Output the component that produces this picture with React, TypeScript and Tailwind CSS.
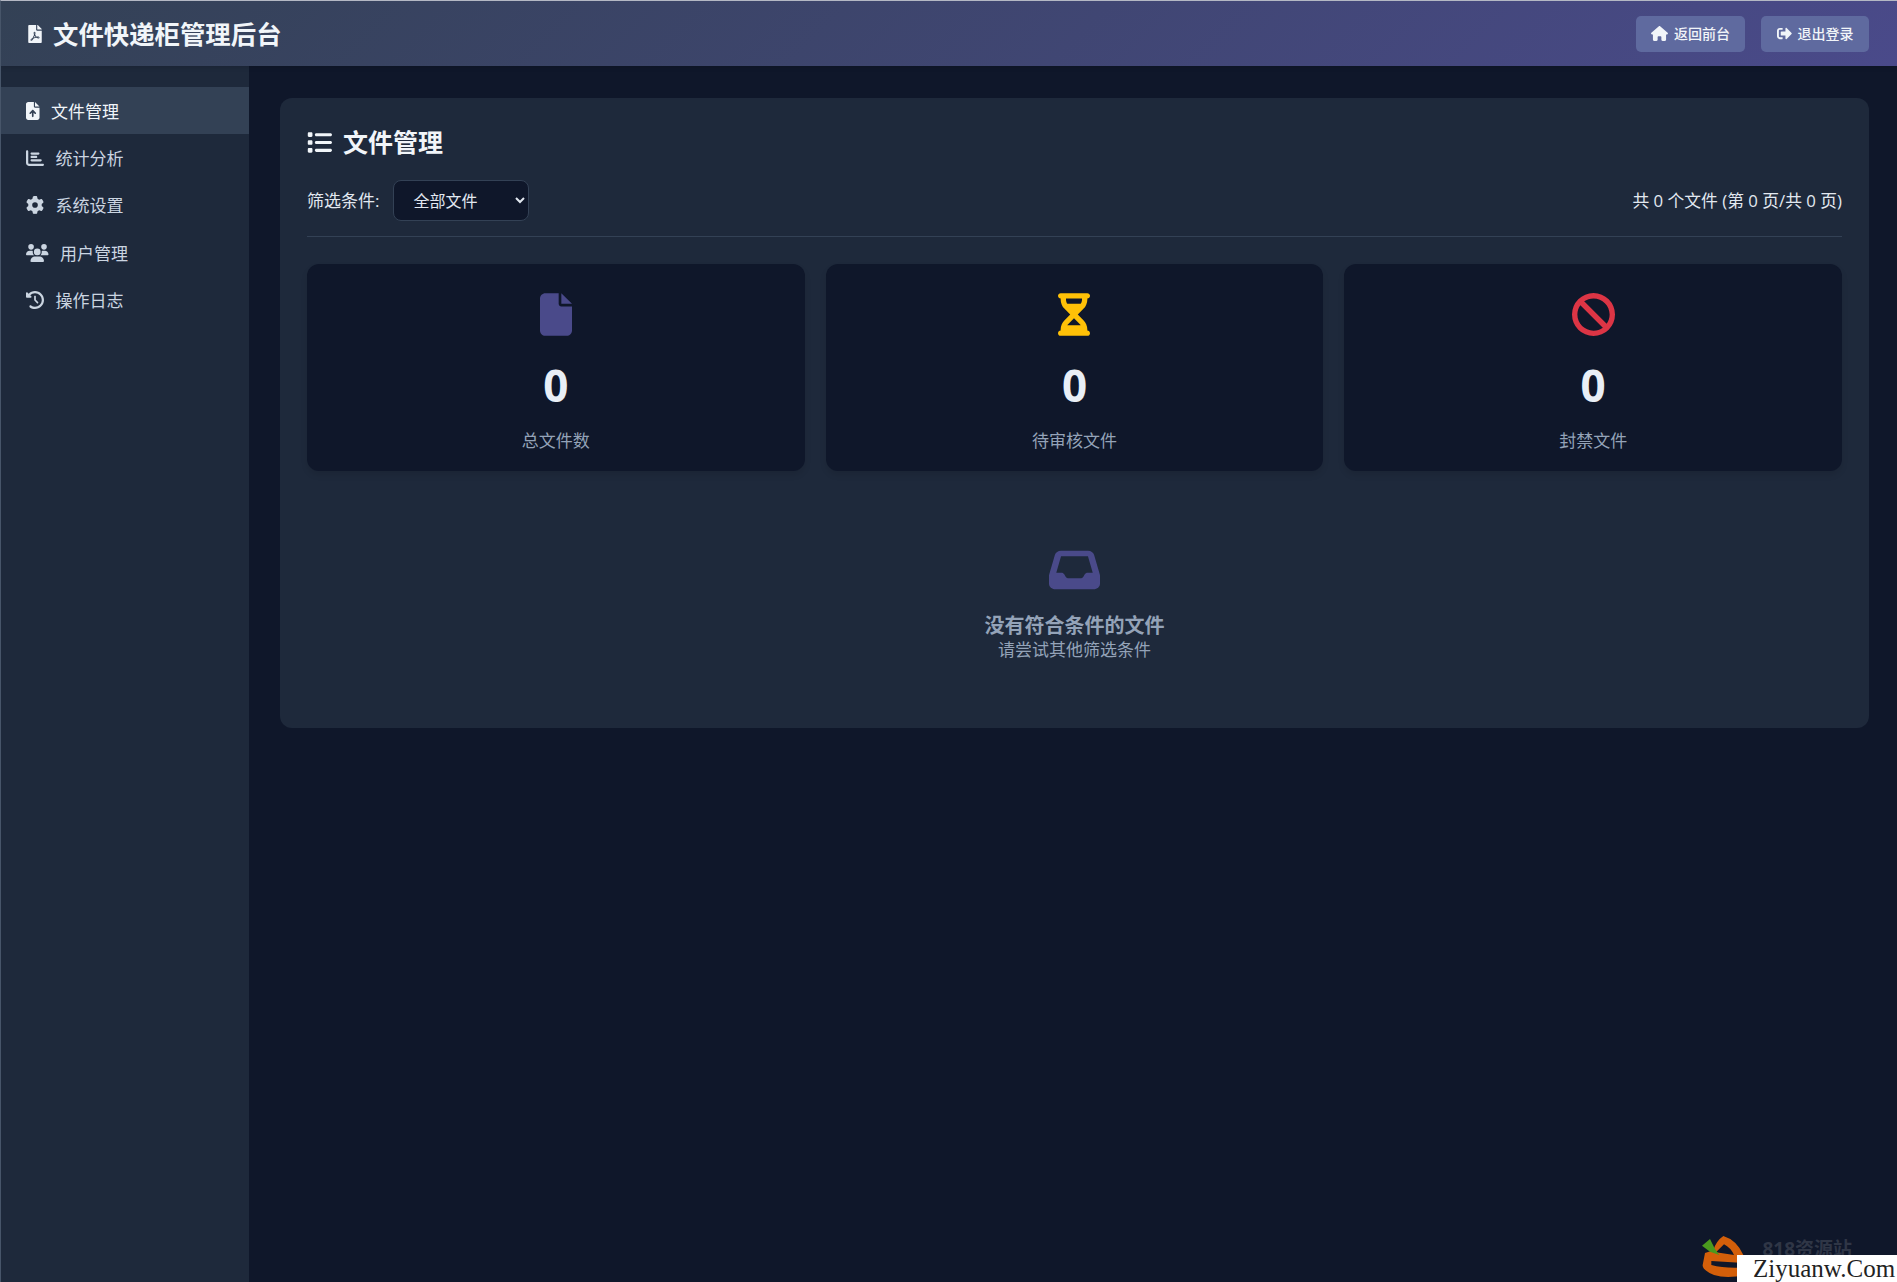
import React from "react";
import { FaFilePdf, FaSignOutAlt } from "react-icons/fa";
import { FaFileArrowUp, FaChartBar, FaGear, FaUsers, FaClockRotateLeft, FaHouse, FaList, FaFile, FaHourglassHalf, FaBan, FaInbox } from "react-icons/fa6";

const FONT = "font-['Open_Sans','Noto_Sans_CJK_SC',sans-serif]";

function NavItem({ icon, label, active }: { icon: React.ReactNode; label: string; active?: boolean }) {
  return (
    <div className={`flex h-[47.3px] items-center gap-[11.5px] pl-[25px] text-[17px] ${active ? "bg-[#334155] text-[#f1f5f9]" : "text-[#cbd5e1]"}`}>
      {icon}
      <span className="pt-[2px]">{label}</span>
    </div>
  );
}

function Stat({ icon, value, label }: { icon: React.ReactNode; value: string; label: string }) {
  return (
    <div className="flex h-[207px] flex-col items-center rounded-[12px] bg-[#0f172a] pt-[29px] shadow-[0_4px_6px_rgba(0,0,0,0.1)]">
      <div className="h-[43px] leading-none">{icon}</div>
      <div className="mt-[26px] h-[46px] text-[44px] font-bold leading-[46px] text-[#e9eff6]">{value}</div>
      <div className="mt-[21px] text-[17px] leading-[24px] text-[#94a3b8]">{label}</div>
    </div>
  );
}

function HeaderButton({ icon, label, w }: { icon: React.ReactNode; label: string; w: string }) {
  return (
    <div className={`flex h-[36px] items-center justify-center gap-[6px] rounded-[5px] bg-[#5f6a9f] text-[14px] font-medium text-[#f1f5f9] ${w}`}>
      {icon}
      <span>{label}</span>
    </div>
  );
}

export default function App() {
  return (
    <div className={`relative flex min-h-screen flex-col overflow-hidden border-l border-t border-l-[#475569] border-t-[#b4b8c4] bg-[#0f172a] ${FONT}`}>
      <header className="relative z-10 flex h-[65px] items-center justify-between bg-[linear-gradient(135deg,#334155,#4a4a8a)] pl-[27px] pr-[28px] shadow-[0_2px_4px_rgba(0,0,0,0.1)]">
        <div className="flex items-center gap-[11px]">
          <FaFilePdf className="h-[18px] w-[14px] text-[#f1f5f9]" />
          <h1 className="pt-[2px] text-[25.4px] font-bold leading-none text-[#f1f5f9]">文件快递柜管理后台</h1>
        </div>
        <div className="flex items-center gap-[16px]">
          <HeaderButton icon={<FaHouse className="h-[15px] w-[17px]" />} label="返回前台" w="w-[109px]" />
          <HeaderButton icon={<FaSignOutAlt className="h-[15px] w-[15px]" />} label="退出登录" w="w-[108px]" />
        </div>
      </header>
      <div className="flex flex-1">
        <aside className="w-[248px] shrink-0 bg-[#1e293b] pt-[21px]">
          <NavItem active icon={<FaFileArrowUp className="h-[18px] w-[13.5px]" />} label="文件管理" />
          <NavItem icon={<FaChartBar className="h-[18px] w-[18px]" />} label="统计分析" />
          <NavItem icon={<FaGear className="h-[18px] w-[18px]" />} label="系统设置" />
          <NavItem icon={<FaUsers className="h-[18px] w-[22.5px]" />} label="用户管理" />
          <NavItem icon={<FaClockRotateLeft className="h-[18px] w-[18px]" />} label="操作日志" />
        </aside>
        <main className="flex-1 pl-[31px] pr-[28px] pt-[32px]">
          <section className="h-[630px] rounded-[12px] bg-[#1e293b] px-[27px] pt-[27px]">
            <div className="flex h-[34px] items-center gap-[11px] text-[#f1f5f9]">
              <FaList className="h-[25px] w-[25px]" />
              <h2 className="text-[25px] font-bold leading-none">文件管理</h2>
            </div>
            <div className="mt-[21px] flex h-[41px] items-center justify-between">
              <div className="flex items-center gap-[14px]">
                <span className="text-[17px] text-[#e2e8f0]">筛选条件:</span>
                <select className="h-[41px] w-[136px] rounded-[8px] border border-[#334155] bg-[#0f172a] px-[15px] text-[16px] text-[#e2e8f0]">
                  <option>全部文件</option>
                </select>
              </div>
              <span className="text-[16.8px] text-[#e2e8f0]">共 0 个文件 (第 0 页/共 0 页)</span>
            </div>
            <div className="mt-[15px] h-px bg-[#334155]" />
            <div className="mt-[27px] grid grid-cols-3 gap-[21px]">
              <Stat icon={<FaFile className="h-[43px] w-[32px] text-[#4a4a8a]" />} value="0" label="总文件数" />
              <Stat icon={<FaHourglassHalf className="h-[43px] w-[32px] text-[#ffc107]" />} value="0" label="待审核文件" />
              <Stat icon={<FaBan className="h-[43px] w-[43px] text-[#dc3545]" />} value="0" label="封禁文件" />
            </div>
            <div className="mt-[77px] flex flex-col items-center">
              <FaInbox preserveAspectRatio="none" className="h-[44px] w-[51px] text-[#4a4a8a]" />
              <div className="mt-[21px] pt-[1px] text-[20px] font-bold leading-[24px] text-[#94a3b8]">没有符合条件的文件</div>
              <div className="text-[17px] leading-[24px] text-[#94a3b8]">请尝试其他筛选条件</div>
            </div>
          </section>
        </main>
      </div>
      <svg className="absolute bottom-0 right-[107px] h-[57px] w-[100px]" viewBox="0 0 300 171">
        <path
          fillRule="evenodd"
          fill="#d35f0a"
          d="M100 33 Q 140 45 160 90 L165 150 Q 110 162 72 150 Q 36 135 38 120 L45 84 L70 76 Q 78 48 100 33 Z M78 82 L102 58 Q 122 68 132 90 Z M64 108 L150 113 L150 128 Q 100 130 64 120 Z"
        />
        <path d="M36 62 L60 42 L75 72 L88 90 L60 80 Z" fill="#4a9a1e" />
      </svg>
      <div className="absolute bottom-[21px] right-[45px] text-[19px] font-bold leading-[24px] text-[#2f3646]">818资源站</div>
      <div className="absolute bottom-0 right-0 h-[27px] w-[160px] bg-white pl-[16px] font-['Liberation_Serif',serif] text-[25px] leading-[27px] text-[#222]">
        Ziyuanw.Com
      </div>
    </div>
  );
}
